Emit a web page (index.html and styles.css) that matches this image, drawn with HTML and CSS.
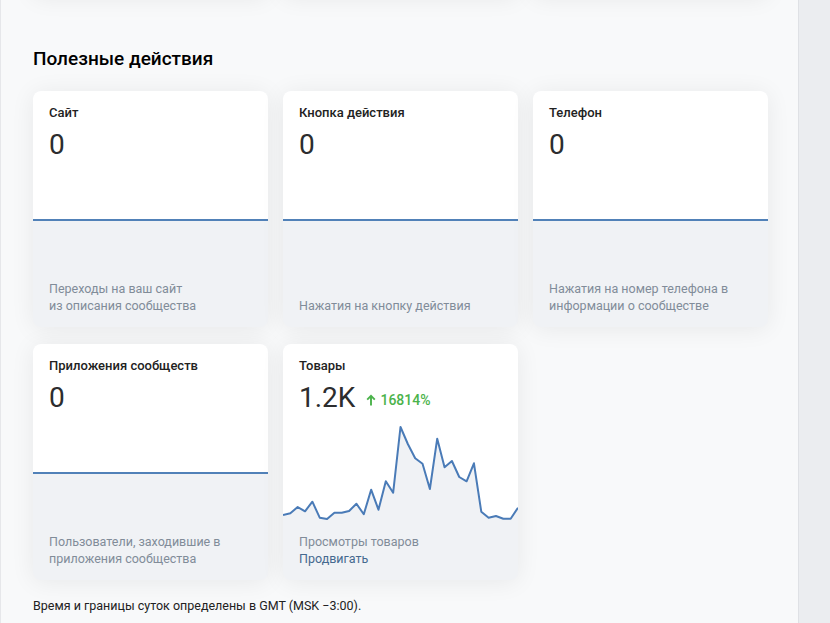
FILE: index.html
```html
<!DOCTYPE html>
<html lang="ru">
<head>
<meta charset="utf-8">
<link rel="stylesheet" href="styles.css">
</head>
<body>
<div class="page">
  <main class="main">
    <div class="stub-row">
      <div class="stub"></div><div class="stub"></div><div class="stub"></div>
    </div>
    <h2 class="heading">Полезные действия</h2>
    <div class="grid">
      <div class="card">
        <div class="head">
          <div class="title">Сайт</div>
          <div class="value">0</div>
        </div>
        <div class="chart-empty"></div>
        <div class="foot">Переходы на ваш сайт<br>из описания сообщества</div>
      </div>
      <div class="card">
        <div class="head">
          <div class="title">Кнопка действия</div>
          <div class="value">0</div>
        </div>
        <div class="chart-empty"></div>
        <div class="foot">Нажатия на кнопку действия</div>
      </div>
      <div class="card">
        <div class="head">
          <div class="title">Телефон</div>
          <div class="value">0</div>
        </div>
        <div class="chart-empty"></div>
        <div class="foot">Нажатия на номер телефона в информации о сообществе</div>
      </div>
      <div class="card">
        <div class="head">
          <div class="title">Приложения сообществ</div>
          <div class="value">0</div>
        </div>
        <div class="chart-empty"></div>
        <div class="foot">Пользователи, заходившие в приложения сообщества</div>
      </div>
      <div class="card">
        <div class="head">
          <div class="title">Товары</div>
          <div class="value">1.2K<span class="delta"><svg class="arrow" width="10" height="12" viewBox="0 0 10 12"><path d="M5 11.5V2M1.2 5.6L5 1.8l3.8 3.8" fill="none" stroke="#4bb34b" stroke-width="1.9"/></svg>16814%</span></div>
        </div>
        <svg class="chart" width="235" height="112" viewBox="0 0 235 112">
          <polygon fill="#ffffff" points="0,0 235,0 235,94.7 227.66,105.7 220.31,105.7 212.97,103 205.63,104.7 198.28,98.7 190.94,50.3 183.59,68.3 176.25,64 168.91,48 161.56,54.3 154.22,25.7 146.88,76 139.53,50.7 132.19,45.3 124.84,31 117.5,14 110.16,79.7 102.81,68.3 95.47,96.7 88.13,76.7 80.78,101.3 73.44,90.7 66.09,98 58.75,99.7 51.41,99.7 44.06,106 36.72,104.7 29.38,88.7 22.03,98.3 14.69,94 7.34,100.3 0,102"/>
          <polyline fill="none" stroke="#4a7bb7" stroke-width="2" stroke-linejoin="round" points="0,102 7.34,100.3 14.69,94 22.03,98.3 29.38,88.7 36.72,104.7 44.06,106 51.41,99.7 58.75,99.7 66.09,98 73.44,90.7 80.78,101.3 88.13,76.7 95.47,96.7 102.81,68.3 110.16,79.7 117.5,14 124.84,31 132.19,45.3 139.53,50.7 146.88,76 154.22,25.7 161.56,54.3 168.91,48 176.25,64 183.59,68.3 190.94,50.3 198.28,98.7 205.63,104.7 212.97,103 220.31,105.7 227.66,105.7 235,94.7"/>
        </svg>
        <div class="foot">Просмотры товаров<br><a class="link">Продвигать</a></div>
      </div>
    </div>
    <p class="note">Время и границы суток определены в GMT (MSK −3:00).</p>
  </main>
  <aside class="side"></aside>
</div>
</body>
</html>
```

FILE: styles.css
```css
html, body {
  margin: 0;
  padding: 0;
  height: 100%;
  overflow: hidden;
}
body {
  font-family: Roboto, "Noto Sans", Arial, sans-serif;
  color: #222;
  background: #ebedf0;
}
.page {
  display: flex;
  height: 623px;
}
.main {
  flex: none;
  background: #f8f9fa;
  border-left: 1px solid #e6e7ea;
  border-right: 1px solid #dfe1e5;
  padding: 0 0 0 32px;
  box-sizing: content-box;
  width: 765px;
}
.side {
  flex: 1;
  background: #ebedf0;
}
.stub-row {
  display: grid;
  grid-template-columns: repeat(3, 235px);
  column-gap: 15px;
  margin-top: -45px;
}
.stub {
  height: 40px;
  background: #f0f2f5;
  border-radius: 8px;
  box-shadow: 0 2px 24px rgba(0, 0, 0, 0.08);
}
.heading {
  margin: 52px 0 0;
  font-size: 19px;
  line-height: 24px;
  font-weight: 500;
  color: #000;
}
.grid {
  display: grid;
  grid-template-columns: repeat(3, 235px);
  gap: 17px 15px;
  margin-top: 20px;
}
.card {
  height: 236px;
  display: flex;
  flex-direction: column;
  background: #f0f2f5;
  border-radius: 8px;
  overflow: hidden;
  box-shadow: 0 2px 24px rgba(0, 0, 0, 0.07);
}
.head {
  background: #fff;
  padding: 14px 16px 0;
  height: 55px;
}
.title {
  font-size: 13px;
  line-height: 16px;
  font-weight: 500;
  color: #222;
}
.value {
  margin-top: 8px;
  font-size: 28px;
  line-height: 32px;
  color: #2c2d2e;
  display: flex;
  align-items: center;
}
.delta {
  display: inline-flex;
  align-items: center;
  margin-left: 11px;
  margin-top: 4px;
  font-size: 14px;
  line-height: 16px;
  font-weight: 500;
  color: #4bb34b;
}
.arrow {
  margin-right: 4px;
}
.chart-empty {
  height: 59px;
  background: #fff;
  border-bottom: 2px solid #5181b8;
}
.chart {
  display: block;
}
.foot {
  margin-top: auto;
  padding: 0 16px 13px;
  font-size: 12.5px;
  line-height: 17px;
  color: #818c99;
}
.link {
  color: #45698f;
  text-decoration: none;
}
.note {
  margin: 17px 0 0;
  font-size: 12.5px;
  line-height: 17px;
  color: #222;
}
```
